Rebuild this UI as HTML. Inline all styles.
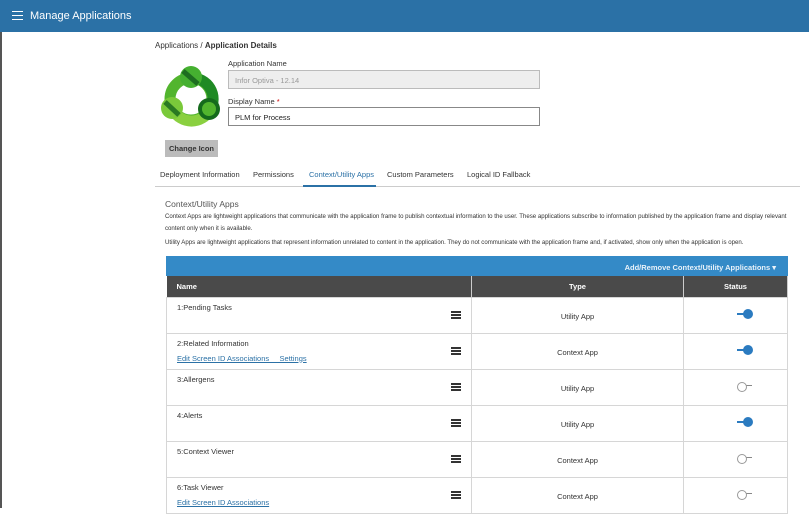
<!DOCTYPE html><html><head><style>
*{box-sizing:border-box;margin:0;padding:0}
body{width:809px;height:508px;overflow:hidden;background:#fff;font-family:"Liberation Sans",sans-serif;color:#333;position:relative}
.hdr{position:absolute;left:0;top:0;width:809px;height:32px;background:#2b71a6;color:#fff;font-size:11px}
.a{position:absolute;white-space:nowrap}
.inp{position:absolute;left:228px;width:312px;height:19px;border:1px solid #bbb;font-size:7.5px;padding:5px 6px}
table{position:absolute;left:166px;top:276px;width:622px;border-collapse:collapse;font-size:7.5px}
th{background:#4a4a4a;color:#fff;height:21px;font-weight:bold;border-right:1px solid #ccc}
td{border:1px solid #d6d6d6;height:36px;vertical-align:top;position:relative}
td.t{text-align:center;vertical-align:middle;padding-top:3px}
.nm{position:absolute;left:10px;top:5px}
.ln{position:absolute;left:10px;top:20px;color:#2b71a6;text-decoration:underline}
.hb{position:absolute;left:284px;top:13px;width:10px;height:8px;border-top:2px solid #333;border-bottom:2px solid #333}
.hb:after{content:"";position:absolute;left:0;right:0;top:1px;border-top:2px solid #333}
.on,.off{position:absolute;left:53px;top:11px;width:16px;height:10px}
.on:before{content:"";position:absolute;left:0;top:4px;width:10px;height:2px;background:#2b7bc0}
.on:after{content:"";position:absolute;left:6px;top:0;width:10px;height:10px;border-radius:50%;background:#2b7bc0}
.off:before{content:"";position:absolute;left:8px;top:4px;width:7px;height:1.5px;background:#888}
.off:after{content:"";position:absolute;left:0;top:1px;width:8px;height:8px;border-radius:50%;border:1px solid #999;background:#fff}
</style></head><body>
<div class="hdr"><div class="a" style="left:12px;top:11px;width:11px;height:9px;border-top:1.5px solid #fff;border-bottom:1.5px solid #fff"></div><div class="a" style="left:12px;top:15px;width:11px;border-top:1.5px solid #fff"></div><div class="a" style="left:30px;top:10px;font-size:11px">Manage Applications</div></div>
<div class="a" style="left:0;top:32px;width:2px;height:476px;background:#555"></div>
<div class="a" style="left:155px;top:41px;font-size:8px">Applications / <b>Application Details</b></div>
<svg class="a" style="left:160px;top:65px" width="63" height="63" viewBox="0 0 63 63">
<circle cx="31" cy="34" r="21" fill="none" stroke="#52b52e" stroke-width="11"/>
<path d="M31 13 A21 21 0 0 1 50 45" fill="none" stroke="#1f8a24" stroke-width="11"/>
<path d="M13 45 A21 21 0 0 0 50 45" fill="none" stroke="#8ad040" stroke-width="11"/>
<circle cx="31" cy="12" r="11" fill="#45b030"/><path d="M23 6 L38 19" stroke="#1d6e20" stroke-width="5"/>
<circle cx="12" cy="43" r="11" fill="#7ac93a"/><path d="M5 37 L19 50" stroke="#2a7a22" stroke-width="5"/>
<circle cx="49" cy="44" r="11" fill="#156b1c"/><circle cx="49" cy="44" r="7" fill="#52b52e"/>
</svg>
<div class="a" style="left:228px;top:59px;font-size:7.5px">Application Name</div>
<div class="inp" style="top:70px;background:#eee;color:#999">Infor Optiva - 12.14</div>
<div class="a" style="left:228px;top:97px;font-size:7.5px">Display Name <span style="color:#c00">*</span></div>
<div class="inp" style="top:107px;background:#fff;color:#222;border-color:#888">PLM for Process</div>
<div class="a" style="left:165px;top:140px;width:53px;height:17px;background:#bbb;font-size:7.5px;font-weight:bold;text-align:center;padding-top:4px">Change Icon</div>
<div class="a" style="left:160px;top:170px;font-size:7.5px">Deployment Information</div>
<div class="a" style="left:253px;top:170px;font-size:7.5px">Permissions</div>
<div class="a" style="left:309px;top:170px;font-size:7.5px;color:#2b71a6">Context/Utility Apps</div>
<div class="a" style="left:387px;top:170px;font-size:7.5px">Custom Parameters</div>
<div class="a" style="left:467px;top:170px;font-size:7.5px">Logical ID Fallback</div>
<div class="a" style="left:155px;top:186px;width:645px;height:1px;background:#ccc"></div>
<div class="a" style="left:303px;top:185px;width:73px;height:2px;background:#2b71a6"></div>
<div class="a" style="left:165px;top:199px;font-size:8.5px;color:#555">Context/Utility Apps</div>
<div class="a" style="left:165px;top:211px;font-size:6.1px;line-height:12px;white-space:normal;width:632px">Context Apps are lightweight applications that communicate with the application frame to publish contextual information to the user. These applications subscribe to information published by the application frame and display relevant content only when it is available.</div>
<div class="a" style="left:165px;top:239px;font-size:6.1px">Utility Apps are lightweight applications that represent information unrelated to content in the application. They do not communicate with the application frame and, if activated, show only when the application is open.</div>
<div class="a" style="left:166px;top:256px;width:622px;height:20px;background:#348ac7;color:#e8f2fa;font-size:7.5px;font-weight:bold;text-align:right;padding:7px 12px 0 0">Add/Remove Context/Utility Applications ▾</div>
<table>
<tr><th style="width:305px;text-align:left;padding-left:10px">Name</th><th style="width:212px">Type</th><th>Status</th></tr>
<tr><td><span class="nm">1:Pending Tasks</span><span class="hb"></span></td><td class="t">Utility App</td><td><span class="on"></span></td></tr>
<tr><td><span class="nm">2:Related Information</span><span class="ln">Edit Screen ID Associations &nbsp;&nbsp;&nbsp; Settings</span><span class="hb"></span></td><td class="t">Context App</td><td><span class="on"></span></td></tr>
<tr><td><span class="nm">3:Allergens</span><span class="hb"></span></td><td class="t">Utility App</td><td><span class="off"></span></td></tr>
<tr><td><span class="nm">4:Alerts</span><span class="hb"></span></td><td class="t">Utility App</td><td><span class="on"></span></td></tr>
<tr><td><span class="nm">5:Context Viewer</span><span class="hb"></span></td><td class="t">Context App</td><td><span class="off"></span></td></tr>
<tr><td><span class="nm">6:Task Viewer</span><span class="ln">Edit Screen ID Associations</span><span class="hb"></span></td><td class="t">Context App</td><td><span class="off"></span></td></tr>
</table>
</body></html>
